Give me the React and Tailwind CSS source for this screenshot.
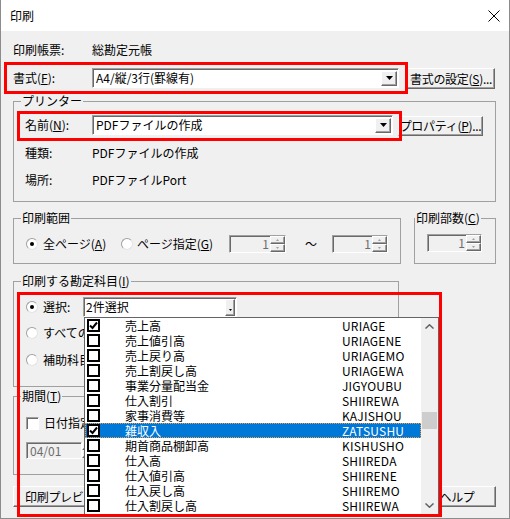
import React from 'react';

// classic win32 bevels
const raised = 'border border-t-white border-l-white border-b-[#696969] border-r-[#696969] shadow-[inset_-1px_-1px_0_#a0a0a0]';
const sunken = 'border border-t-[#a0a0a0] border-l-[#a0a0a0] border-b-white border-r-white shadow-[inset_1px_1px_0_#696969]';

const ITEMS = [
  ['売上高', 'URIAGE', true],
  ['売上値引高', 'URIAGENE'],
  ['売上戻り高', 'URIAGEMO'],
  ['売上割戻し高', 'URIAGEWA'],
  ['事業分量配当金', 'JIGYOUBU'],
  ['仕入割引', 'SHIIREWA'],
  ['家事消費等', 'KAJISHOU'],
  ['雑収入', 'ZATSUSHU', true, true],
  ['期首商品棚卸高', 'KISHUSHO'],
  ['仕入高', 'SHIIREDA'],
  ['仕入値引高', 'SHIIRENE'],
  ['仕入戻し高', 'SHIIREMO'],
  ['仕入割戻し高', 'SHIIREWA'],
];

const Btn = ({ className = '', children }) => (
  <div className={`flex items-center overflow-hidden whitespace-nowrap bg-[#f0f0f0] leading-[18px] tracking-[-0.3px] ${raised} ${className}`}>
    {children}
  </div>
);

const DownArrow = () => (
  <svg width="7" height="4" viewBox="0 0 7 4"><polygon points="0,0 7,0 3.5,4" fill="#000" /></svg>
);

const Combo = ({ className = '', children }) => (
  <div className={`flex items-center bg-white ${sunken} ${className}`}>
    <span className="flex-1 pl-[3px] leading-[18px] whitespace-nowrap">{children}</span>
    <div className={`mr-[1px] flex h-[15px] w-[16px] items-center justify-center bg-[#f0f0f0] ${raised}`}>
      <DownArrow />
    </div>
  </div>
);

const SpinHalf = ({ up }) => (
  <div className={`flex h-[8px] items-center justify-center bg-[#f0f0f0] ${raised}`}>
    <svg width="3" height="2" viewBox="0 0 3 2">
      <polygon points={up ? '0,2 3,2 1.5,0' : '0,0 3,0 1.5,2'} fill="#a0a0a0" />
    </svg>
  </div>
);

const Spin = ({ className = '' }) => (
  <div className={`flex h-[18px] bg-[#f0f0f0] ${sunken} ${className}`}>
    <span className="flex-1 pr-[1px] text-right leading-[16px] text-[#6d6d6d]">1</span>
    <div className="flex w-[15px] flex-col">
      <SpinHalf up />
      <SpinHalf />
    </div>
  </div>
);

const Radio = ({ on }) => (
  <span className="flex h-[12px] w-[12px] shrink-0 items-center justify-center rounded-full border border-t-[#a0a0a0] border-l-[#a0a0a0] border-b-[#e3e3e3] border-r-[#e3e3e3] bg-white">
    {on && <span className="h-[4px] w-[4px] rounded-full bg-black" />}
  </span>
);

const Group = ({ label, labelLeft = 'left-[7px]', className = '', children }) => (
  <div className={`relative border border-[#a0a0a0] ${className}`}>
    <span className={`absolute -top-[10px] ${labelLeft} bg-[#f0f0f0] px-[1px] leading-[18px] whitespace-nowrap`}>{label}</span>
    {children}
  </div>
);

const Check = ({ on }) => (
  <span className="flex h-[13px] w-[13px] shrink-0 items-center justify-center border-2 border-black bg-white">
    {on && (
      <svg width="9" height="9" viewBox="0 0 9 9">
        <polyline points="1,4.5 3.5,7 8,1.5" fill="none" stroke="#000" strokeWidth="2" />
      </svg>
    )}
  </span>
);

const Chevron = ({ up }) => (
  <svg width="9" height="5" viewBox="0 0 9 5">
    <polyline points={up ? '0.5,4.5 4.5,0.8 8.5,4.5' : '0.5,0.5 4.5,4.2 8.5,0.5'} fill="none" stroke="#606060" strokeWidth="1.5" />
  </svg>
);

export default function App() {
  return (
    <div className="relative h-[519px] w-[510px] overflow-hidden border-x border-b border-[#8c8c8c] bg-[#f0f0f0] font-['Noto_Sans_CJK_JP','Liberation_Sans',sans-serif] text-[12px] text-black">
      {/* タイトルバー */}
      <div className="flex h-[31px] items-center justify-between bg-white pl-[9px] pr-[8px]">
        <span className="leading-[18px]">印刷</span>
        <svg width="12" height="12" viewBox="0 0 12 12" className="mr-[1px]">
          <path d="M0.5 0.5 L11.5 11.5 M11.5 0.5 L0.5 11.5" stroke="#000" strokeWidth="1" />
        </svg>
      </div>

      <div className="pl-[12px] pr-[13px]">
        <div className="mt-[10px] flex h-[18px] items-center leading-[18px]">
          <span className="w-[79px]">印刷帳票:</span>
          <span>総勘定元帳</span>
        </div>

        <div className="mt-[9px] flex h-[21px] items-start">
          <span className="w-[79px] leading-[20px]">書式(<u>F</u>):</span>
          <Combo className="h-[20px] w-[307px]">A4/縦/3行(罫線有)</Combo>
          <Btn className="ml-[8px] h-[21px] w-[88px] justify-center">書式の設定(<u>S</u>)...</Btn>
        </div>

        {/* プリンター */}
        <Group label="プリンター" className="mt-[12px] h-[101px]">
          <div className="mt-[13px] flex h-[21px] items-start pl-[11px]">
            <span className="w-[67px] leading-[20px]">名前(<u>N</u>):</span>
            <Combo className="h-[20px] w-[301px]">PDFファイルの作成</Combo>
            <Btn className="ml-[5px] mt-[1px] h-[20px] w-[85px] justify-center">プロパティ(<u>P</u>)...</Btn>
          </div>
          <div className="mt-[8px] flex h-[18px] items-center pl-[11px] leading-[18px]">
            <span className="w-[67px]">種類:</span>
            <span>PDFファイルの作成</span>
          </div>
          <div className="mt-[9px] flex h-[18px] items-center pl-[11px] leading-[18px]">
            <span className="w-[67px]">場所:</span>
            <span>PDFファイルPort</span>
          </div>
        </Group>

        {/* 印刷範囲 / 印刷部数 */}
        <div className="mt-[16px] flex h-[46px]">
          <Group label="印刷範囲" className="h-[46px] w-[388px]">
            <div className="mt-[15px] flex h-[19px] items-center pl-[12px] leading-[18px]">
              <div className="flex w-[95px] items-center gap-[5px]">
                <Radio on />
                <span>全ページ(<u>A</u>)</span>
              </div>
              <div className="flex w-[108px] items-center gap-[4px]">
                <Radio />
                <span>ページ指定(<u>G</u>)</span>
              </div>
              <Spin className="w-[57px]" />
              <span className="w-[46px] pl-[19px]">～</span>
              <Spin className="w-[56px]" />
            </div>
          </Group>
          <Group label={<>印刷部数(<u>C</u>)</>} labelLeft="left-0" className="ml-[13px] h-[46px] w-[82px]">
            <div className="mt-[15px] pl-[12px]">
              <Spin className="w-[55px]" />
            </div>
          </Group>
        </div>

        {/* 印刷する勘定科目 */}
        <Group label={<>印刷する勘定科目(<u>I</u>)</>} className="mt-[17px] h-[106px] w-[386px]">
          <div className="mt-[15px] flex h-[20px] items-center pl-[12px] leading-[18px]">
            <div className="flex w-[57px] items-center gap-[5px]">
              <Radio on />
              <span>選択:</span>
            </div>
            <div className={`flex h-[20px] w-[154px] items-center bg-white ${sunken}`}>
              <span className="flex-1 pl-[2px]">2件選択</span>
              <div className={`mr-[1px] flex h-[17px] w-[10px] items-end justify-center pb-[4px] bg-[#f0f0f0] ${raised}`}>
                <svg width="3" height="2" viewBox="0 0 3 2"><polygon points="0,0 3,0 1.5,2" fill="#000" /></svg>
              </div>
            </div>
          </div>
          <div className="mt-[6px] flex h-[20px] items-center gap-[5px] pl-[12px] leading-[18px]">
            <Radio />
            <span>すべての勘定科目</span>
          </div>
          <div className="mt-[7px] flex h-[20px] items-center gap-[5px] pl-[12px] leading-[18px]">
            <Radio />
            <span>補助科目指定</span>
          </div>
        </Group>

        {/* 期間 */}
        <Group label={<>期間(<u>T</u>)</>} className="mt-[9px] h-[79px] w-[300px]">
          <div className="mt-[17px] flex h-[18px] items-center gap-[5px] pl-[12px] leading-[18px]">
            <span className={`h-[13px] w-[13px] bg-white ${sunken}`} />
            <span>日付指定</span>
          </div>
          <div className="mt-[10px] flex pl-[12px]">
            <div className={`flex h-[17px] w-[56px] items-center bg-[#f0f0f0] ${sunken}`}>
              <span className="pl-[3px] leading-[15px] text-[#6d6d6d]">04/01</span>
            </div>
            <div className="flex w-[15px] flex-col">
              <SpinHalf up />
              <SpinHalf />
            </div>
          </div>
        </Group>

        <div className="mt-[11px] flex h-[21px]">
          <Btn className="h-[21px] w-[110px] justify-start pl-[11px]">印刷プレビュー(<u>V</u>)</Btn>
          <Btn className="ml-auto h-[21px] w-[78px] justify-center">ヘルプ</Btn>
        </div>
      </div>

      {/* ドロップダウンリスト */}
      <div className="absolute left-[83px] top-[317px] flex h-[198px] w-[355px] border border-[#646464] bg-white">
        <div className="flex w-[336px] flex-col">
          {ITEMS.map(([name, code, on, sel]) => (
            <div
              key={name}
              className={`flex h-[15px] items-center pl-[2px] leading-[15px] ${sel ? 'bg-[#0078d7] text-white outline outline-1 outline-dotted outline-[#f59a3c] -outline-offset-1' : ''}`}
            >
              <Check on={on} />
              <span className="ml-[25px] w-[217px] whitespace-nowrap">{name}</span>
              <span className="tracking-[0.2px]">{code}</span>
            </div>
          ))}
        </div>
        <div className="flex w-[17px] flex-col bg-[#f0f0f0]">
          <div className="flex h-[17px] items-center justify-center"><Chevron up /></div>
          <div className="flex-1">
            <div className="ml-[1px] mt-[77px] h-[17px] w-[15px] bg-[#cdcdcd]" />
          </div>
          <div className="flex h-[17px] items-center justify-center"><Chevron /></div>
        </div>
      </div>

      {/* 赤枠 */}
      <div className="pointer-events-none absolute left-[3px] top-[62px] h-[32px] w-[404px] border-[3px] border-[#ff0000]" />
      <div className="pointer-events-none absolute left-[16px] top-[111px] h-[30px] w-[385px] border-[3px] border-[#ff0000]" />
      <div className="pointer-events-none absolute left-[16px] top-[292px] h-[225px] w-[425px] border-[3px] border-[#ff0000]" />
    </div>
  );
}
